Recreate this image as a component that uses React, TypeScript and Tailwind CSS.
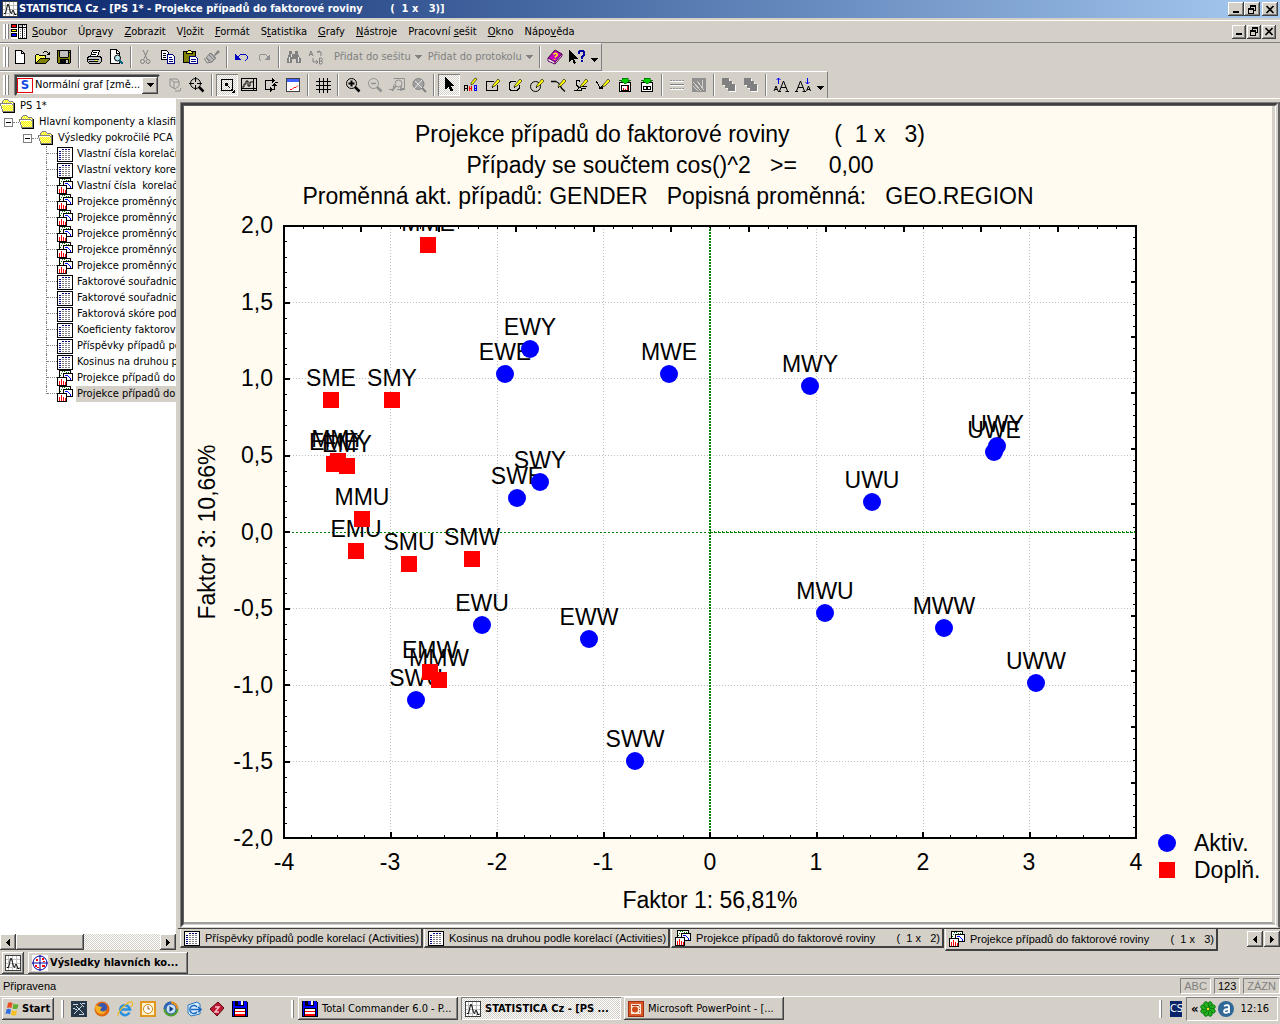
import type { ReactNode } from "react";
import clsx from "clsx";

const raised = "bg-[#d4d0c8] shadow-[inset_-1px_-1px_#404040,inset_1px_1px_#fff,inset_-2px_-2px_#808080]";
const pressed =
  "bg-[repeating-conic-gradient(#fff_0_25%,#d4d0c8_0_50%)] bg-[length:2px_2px] shadow-[inset_1px_1px_#808080,inset_-1px_-1px_#fff]";
const tahoma = "font-['DejaVu_Sans_Condensed','DejaVu_Sans',sans-serif] text-[11px]";
const arial = "font-['Liberation_Sans',sans-serif] text-[11px]";

function Ico({ children, smooth }: { children: ReactNode; smooth?: boolean }) {
  return (
    <svg
      viewBox="0 0 16 16"
      className="block h-4 w-4 shrink-0"
      fill="none"
      stroke="none"
      shapeRendering={smooth ? "auto" : "crispEdges"}
      aria-hidden="true"
    >
      {children}
    </svg>
  );
}

const palette: Record<string, string> = {
  k: "#000",
  w: "#fff",
  g: "#808080",
  l: "#c0c0c0",
  y: "#ffff00",
  o: "#808000",
  b: "#0000ff",
  n: "#000080",
  r: "#ff0000",
  e: "#008000",
  c: "#f8f890",
};

// one character per pixel, "." is transparent
function Pix({ rows }: { rows: string[] }) {
  return (
    <Ico>
      {rows.flatMap((row, y) =>
        row.split("").map((c, x) => (palette[c] ? <rect key={`${x}-${y}`} x={x} y={y} width="1" height="1" fill={palette[c]} /> : null))
      )}
    </Ico>
  );
}

const art = {
  sheet: [
    "................",
    "kkkkkkkkkkkkkkkk",
    "kwwwwwwwwwwwwwwk",
    "kwwwwnnwnnwnnwwk",
    "kwwwwwwwwwwwwwwk",
    "kwnnwggwggwggwwk",
    "kwwwwwwwwwwwwwwk",
    "kwnnwggwggwggwwk",
    "kwwwwwwwwwwwwwwk",
    "kwnnwggwggwggwwk",
    "kwwwwwwwwwwwwwwk",
    "kwnnwggwggwggwwk",
    "kwwwwwwwwwwwwwwk",
    "kwnnwggwggwggwwk",
    "kwwwwwwwwwwwwwwk",
    "kkkkkkkkkkkkkkkk",
  ],
  graph: [
    "..kkkkkkkkkkkk..",
    "..kwwewewwwwwk..",
    "..kwwwwwwewewk..",
    "..kwewkkkkkkkkkk",
    "..kwwwkwwwwwwwwk",
    "..kewwkwbbbwwwwk",
    "..kwwwkwwwwbwwwk",
    "kkkkkkkkkkwwbwwk",
    "kwwwwwwwwkwwwbwk",
    "kwwwrwwwwkwwwbwk",
    "kwwwrwwwwkkkkkkk",
    "kwrwrwrwwk......",
    "kwrwrwrwrk......",
    "kwrwrwrwrk......",
    "kwrwrwrwrk......",
    "kkkkkkkkkk......",
  ],
  folder: [
    "................",
    "....gggg........",
    "...gcycyg.......",
    "..gycycycgggg...",
    "..gcycycycycyg..",
    "gggggggggggg.gk.",
    "gwwwwwwwwwwwggk.",
    "gwycycycycycygk.",
    ".gcycycycycycgk.",
    ".gycycycycycygk.",
    ".gwycycycycycgk.",
    "..gcycycycycygk.",
    "..gycycycycycgk.",
    "..ggggggggggggk.",
    "...kkkkkkkkkkkk.",
    "................",
  ],
  blank: [
    "................",
    "...kkkkkkk......",
    "...kwwwwwkk.....",
    "...kwwwwwkwk....",
    "...kwwwwwkkkk...",
    "...kwwwwwwwwk...",
    "...kwwwwwwwwk...",
    "...kwwwwwwwwk...",
    "...kwwwwwwwwk...",
    "...kwwwwwwwwk...",
    "...kwwwwwwwwk...",
    "...kwwwwwwwwk...",
    "...kwwwwwwwwk...",
    "...kwwwwwwwwk...",
    "...kkkkkkkkkk...",
    "................",
  ],
  open: [
    "................",
    "................",
    "..........kkk...",
    ".........k...k.k",
    "..............kk",
    "..kkk........kkk",
    ".kcyckkkkkkk....",
    ".kycycycycyk....",
    ".kcycycycyck....",
    ".kycyckkkkkkkkkk",
    ".kcyckoooooooook",
    ".kyckoooooooook.",
    ".kckoooooooook..",
    ".kkoooooooook...",
    ".kkkkkkkkkkk....",
    "................",
  ],
  save: [
    "................",
    ".kkkkkkkkkkkkkk.",
    ".kokllllllllkok.",
    ".kokllllllllkkk.",
    ".kokllllllllkok.",
    ".kokllllllllkok.",
    ".kokllllllllkok.",
    ".kokllllllllkok.",
    ".kookkkkkkkkook.",
    ".kooooooooooook.",
    ".kookkkkkkkkkok.",
    ".kookkkkkkllkok.",
    ".kookkkkkkllkok.",
    ".kookkkkkkllkok.",
    "..kkkkkkkkkkkk..",
    "................",
  ],
  floppy: [
    "kbbkkkbbbwwkbbk.",
    "kbbkkkbbbwwkbbbk",
    "kbbkkkbbbwwkbbbk",
    "kbbkkkbbbwwkbbbk",
    "kbbkkkkkkkkkbbbk",
    "kbbbbbbbbbbbbbbk",
    "kbbbbbbbbbbbbbbk",
    "kbkkkkkkkkkkkkbk",
    "kbkwwwwwwwwwwkbk",
    "kbkwwwwwwwwwwkbk",
    "kbkrrrrrrrrrrkbk",
    "kbkwwwwwwwwwwkbk",
    "kbkwwwwwwwwwwkbk",
    "kbkrrrrrrrrrrkbk",
    "kbkrrrrrrrrrrkbk",
    "kkkkkkkkkkkkkkkk",
  ],
  cursor: [
    "....k...........",
    "....kk..........",
    "....kkk.........",
    "....kkkk........",
    "....kkkkk.......",
    "....kkkkkk......",
    "....kkkkkkk.....",
    "....kkkkkkkk....",
    "....kkkkkkkkk...",
    "....kkkkkk......",
    "....kkk.kkk.....",
    "....kk..kkk.....",
    ".........kkk....",
    ".........kkk....",
    "................",
    "................",
  ],
  menuDoc: [
    "kkkkkk.kkkkkkkkk",
    "krrrrkwklllkwgwk",
    "krrrrkwklllkwwwk",
    "kkkkkkwkkkkkkkkk",
    "wwwwwwwkwwwkwwwk",
    "kkkkkkwkwgwkwgwk",
    "kyyyykwkwwwkwwwk",
    "kkkkkkwkwgwkwgwk",
    "wwwwwwwkwwwkwwwk",
    "kkkkkkwkwgwkwgwk",
    "kbbbbkwkwwwkwwwk",
    "kbbbbkwkwgwkwgwk",
    "kkkkkkwkwwwkwwwk",
    "wwwwwwwkwgwkwgwk",
    "wwwwwwwkkkkkkkkk",
    "................",
  ],
};

const StatLogo = () => (
  <Ico>
    <rect width="16" height="16" fill="#fff" />
    <path d="M3.500 0v16M7.500 0v16M11.500 0v16M0 4.500h16M0 8.500h16M0 12.500h16" stroke="#c0c0c0" />
    <path d="M.5.5h15v15H.5z" stroke="#404040" />
    <path d="M2 12.500h1.500l1-4 1-5h1l1 4 1 4 1 1 1-3h1l1 3v1h2" stroke="#000" shapeRendering="auto" />
  </Ico>
);

const Pencil = () => (
  <>
    <path d="M8 8l5-6 2 2-5 5-3 1z" fill="#ffff00" stroke="#000" strokeWidth=".6" shapeRendering="auto" />
    <path d="M7 10.500h1" stroke="#000" />
  </>
);

const Lens = ({ color = "#000", children }: { color?: string; children?: ReactNode }) => (
  <Ico smooth>
    <circle cx="6.500" cy="6.500" r="5" stroke={color} />
    <path d="M10 10l4.500 4.500" stroke={color} strokeWidth="2.500" />
    {children}
  </Ico>
);

const icons = {
  blank: <Pix rows={art.blank} />,
  open: <Pix rows={art.open} />,
  save: <Pix rows={art.save} />,
  print: (
    <Ico>
      <path d="M4.500 7.500l2-6h7l-2 6z" fill="#fff" stroke="#000" />
      <path d="M7 3.500h4M6 5.500h4" stroke="#000" />
      <path d="M1.500 8.500l2-1h10l2 1v4l-2 2h-10l-2-2z" fill="#c0c0c0" stroke="#000" />
      <path d="M2 10.500h11M3 12.500h9" stroke="#000" />
      <path d="M9 11.500h2" stroke="#ff0" />
    </Ico>
  ),
  preview: (
    <Ico>
      <path d="M2.500.5h6l3 3v11h-9z" fill="#fff" stroke="#000" />
      <path d="M8.500 1v3h3" stroke="#000" />
      <circle cx="9.500" cy="9" r="3" fill="#b8e8f0" stroke="#000" shapeRendering="auto" />
      <path d="M11.500 11.500l3.500 3.500" stroke="#006080" strokeWidth="2" />
    </Ico>
  ),
  cut: (
    <Ico smooth>
      <path d="M5 1l4 9M10 1L6 10" stroke="#808080" />
      <circle cx="4.500" cy="12.500" r="2" stroke="#808080" />
      <circle cx="10" cy="12.500" r="2" stroke="#808080" />
    </Ico>
  ),
  copy: (
    <Ico>
      <path d="M1.500 1.500h5l2 2v7h-7z" fill="#fff" stroke="#000" />
      <path d="M3 4.500h3M3 6.500h3M3 8.500h3" stroke="#000" />
      <path d="M7.500 5.500h5l2 2v7h-7z" fill="#fff" stroke="#000080" />
      <path d="M9 8.500h3M9 10.500h4M9 12.500h4" stroke="#000080" />
    </Ico>
  ),
  paste: (
    <Ico>
      <path d="M1.500 2.500h12v11h-12z" fill="#808000" stroke="#000" />
      <path d="M4.500 3.500l2-2h2l2 2v1h-6z" fill="#ffff60" stroke="#000" />
      <path d="M7.500 7.500h6l2 2v5h-8z" fill="#fff" stroke="#000080" />
      <path d="M9 10.500h5M9 12.500h5" stroke="#000080" />
    </Ico>
  ),
  brush: (
    <Ico smooth>
      <path d="M10 6l4-5 2 2-5 4z" fill="#808080" />
      <path d="M6 4l6 5-4 4-6-4z" fill="#b8b8b8" stroke="#808080" />
      <path d="M7 4l4 5M5 6l5 5M0 9l3 5 5-1M3 9l2 4" stroke="#808080" />
    </Ico>
  ),
  undo: (
    <Ico>
      <path d="M1 5v6h6z" fill="#0000c0" />
      <path d="M4 8l3-3h4l2 2v3l-2 2" stroke="#0000c0" />
    </Ico>
  ),
  redo: (
    <Ico>
      <path d="M14 5v6H8z" fill="#909090" />
      <path d="M12 8L9 5H5L3 7v3l2 2" stroke="#909090" />
    </Ico>
  ),
  find: (
    <Ico>
      <path d="M3 2h3v3h3V2h3v3l3 5v4h-5v-4H6v4H1v-4l2-5z" fill="#808080" />
      <path d="M3.500 8v5M12.500 8v5M5.500 5v3" stroke="#e8e8e8" />
    </Ico>
  ),
  replace: (
    <Ico smooth>
      <path d="M1 7l2-5 2 5M2 5.500h2M9 3h4v4M9 3l3-1M5 9v4h4M8 11l2 2-2 2" stroke="#808080" />
      <path d="M11.500 9v6h2l1-1.500-1-1.500 1-1.500-1-1.500zM11.500 12h2" stroke="#808080" />
    </Ico>
  ),
  book: (
    <Ico smooth>
      <path d="M1 9l7-8 7 4-7 9z" fill="#c000c0" stroke="#400040" />
      <path d="M1 9v3l7 3v-2zM8 15l7-8V5l-7 8" fill="#fff" stroke="#600060" />
      <path d="M6.500 5.500Q8 3.500 10 5q1 1.500-1.500 2.500l-.5 1M7.500 10v1" stroke="#ff0" strokeWidth="1.500" />
    </Ico>
  ),
  whatsThis: (
    <Ico>
      <path d="M0 1v12l3-3 2 5 2-1-2-4h4z" fill="#000" />
      <path d="M10 5V3l1-1h3l1 1v3l-2 2v2M12 12h2" stroke="#0000a0" strokeWidth="2" />
    </Ico>
  ),
  rotate: (
    <Ico smooth>
      <path d="M3 2h7l2 2v5L8 12 3 9zM3 2l4 3v6M7 5h5M8 14h5l1-3" stroke="#909090" />
    </Ico>
  ),
  target: (
    <Lens>
      <path d="M6.500 0v5M6.500 8v5M0 6.500h5M8 6.500h5" stroke="#000" />
    </Lens>
  ),
  fit: (
    <Ico>
      <path d="M2.500 2.500h11v11h-11z" stroke="#000" />
      <path d="M6 6h3v3H6z" fill="#000" />
      <path d="M8 8l3 3M12 12l2 2" stroke="#000" />
      <path d="M16 12v4h-4z" fill="#000" />
    </Ico>
  ),
  graphSize: (
    <Ico>
      <path d="M.5 1.500h15v12H.5zM12.500 1v13M0 11.500h15" stroke="#000" />
      <path d="M1 10h2V7h2V4h2v5h2V5h3" stroke="#000" shapeRendering="auto" />
    </Ico>
  ),
  move: (
    <Ico>
      <path d="M9 3.500H2.500v9H7M11.500 7v5.500H9" stroke="#000" />
      <path d="M9 1l3 2.500L9 6zM9 9l2.500-3L14 9zM7 10l3 2.500L7 15z" fill="#000" />
      <path d="M12 5.500h3" stroke="#000" />
    </Ico>
  ),
  chartWin: (
    <Ico>
      <path d="M1.500 1.500h13v13h-13z" fill="#fff" stroke="#404040" />
      <path d="M2 2h12v3H2z" fill="#4060ff" />
      <path d="M5 12.500h2l2-2h2l2-2" stroke="#ff0000" shapeRendering="auto" />
    </Ico>
  ),
  grid: (
    <Ico>
      <path d="M4.500 1v15M8.500 1v15M12.500 1v15M1 4.500h15M1 8.500h15M1 12.500h15" stroke="#000" />
    </Ico>
  ),
  zoomIn: (
    <Lens>
      <path d="M6.500 3.500v6M3.500 6.500h6" stroke="#000" strokeWidth="2" />
    </Lens>
  ),
  zoomOut: (
    <Lens color="#909090">
      <path d="M4 6.500h5" stroke="#909090" strokeWidth="1.500" />
    </Lens>
  ),
  zoomChart: (
    <Ico smooth>
      <path d="M4.500 1.500h11v10h-3M0 12.500h4l1-5M8 12.500h8" stroke="#909090" />
      <circle cx="9.500" cy="6.500" r="3.500" stroke="#909090" />
      <path d="M7 9l-4 5M12 9v5" stroke="#909090" strokeWidth="1.500" />
    </Ico>
  ),
  zoomCancel: (
    <Ico smooth>
      <circle cx="7.500" cy="7" r="5.500" fill="#a0a0a0" stroke="#808080" />
      <path d="M4 4l9 9M11 3L3 12" stroke="#e8e8e8" />
      <path d="M11 11l4 4" stroke="#808080" strokeWidth="2" />
    </Ico>
  ),
  cursor: <Pix rows={art.cursor} />,
  textTool: (
    <Ico>
      <path d="M1.500 14V8h3v6M2 11.500h2" stroke="#000" />
      <path d="M6.500 14V9M8.500 14V9M7 11.500h2" stroke="#f00" />
      <path d="M11.500 8.500v5h2v-5zM12 11.500h2" stroke="#00f" />
      <path d="M8 6l4-5 2 1-4 5-2 1z" fill="#ff0" stroke="#000" strokeWidth=".6" shapeRendering="auto" />
    </Ico>
  ),
  rectTool: (
    <Ico>
      <path d="M9 4.500H1.500v9h11V8" stroke="#000" />
      <Pencil />
    </Ico>
  ),
  roundTool: (
    <Ico>
      <path d="M9 4.500H4l-2 2v5l2 2h6l2-2V8" stroke="#000" />
      <Pencil />
    </Ico>
  ),
  ovalTool: (
    <Ico smooth>
      <circle cx="6.500" cy="9.500" r="5" stroke="#000" />
      <Pencil />
    </Ico>
  ),
  curveTool: (
    <Ico smooth>
      <path d="M0 4.500h5q3 1 4 4t5 6" stroke="#000" strokeWidth="1.300" />
      <Pencil />
    </Ico>
  ),
  freeTool: (
    <Ico>
      <path d="M1 13.500h3l2-3-3-3V4l3-1 1 2M5 13.500h3l1-2h4M9 9.500h5" stroke="#000" />
      <Pencil />
    </Ico>
  ),
  arrowTool: (
    <Ico>
      <path d="M1 4l5 8" stroke="#000" />
      <path d="M3 12h5V8z" fill="#000" />
      <Pencil />
    </Ico>
  ),
  embedChart: (
    <Ico>
      <path d="M2.500 5.500h11v9h-11z" fill="#fff" stroke="#000" />
      <path d="M4.500 8.500h7v5h-7z" stroke="#000" />
      <path d="M6 13v-2h1v2zM8 13v-1h1v1zM10 13V9h1v4z" fill="#f00" />
      <path d="M5 1h6v2h3L8 7 2 3h3z" fill="#00d000" stroke="#004000" strokeWidth=".5" />
    </Ico>
  ),
  embedObject: (
    <Ico>
      <path d="M2.500 5.500h11v9h-11z" fill="#fff" stroke="#000" />
      <path d="M4 9h8v4H4z" fill="#000" />
      <path d="M5 10h2v2H5zM9 10h2v2H9z" fill="#fff" />
      <path d="M5 1h6v2h3L8 7 2 3h3z" fill="#00d000" stroke="#004000" strokeWidth=".5" />
    </Ico>
  ),
  lines: (
    <Ico>
      <path d="M1 3.500h14M1 11.500h14" stroke="#909090" strokeDasharray="2 1" />
      <path d="M1 7.500h14" stroke="#808080" />
      <path d="M1 8.500h14M1 4.500h14M1 12.500h14" stroke="#fff" />
    </Ico>
  ),
  hatch: (
    <Ico>
      <path d="M1 1h14v14H1z" fill="#909090" />
      <path d="M2 5l8 9M2 9l5 5M6 4l7 9M11 3v9" stroke="#d4d0c8" />
    </Ico>
  ),
  boxes: (
    <Ico>
      <path d="M2 2h7v3h3v3h3v7H8v-3H5V9H2z" fill="#fff" />
      <path d="M1 1h7v3h3v3h3v7H7v-3H4V8H1z" fill="#808080" />
    </Ico>
  ),
  fontUp: (
    <Ico smooth>
      <path d="M1 14l2-5 2 5M2 12.500h2M6.500 14l4-10 4 10M8 10.500h5M5 14.500h3M12.500 14.500H16" stroke="#000" />
      <path d="M5.500 7V1M3.500 3l2-2 2 2" stroke="#00f" />
    </Ico>
  ),
  fontDown: (
    <Ico smooth>
      <path d="M1.500 14l4-10 4 10M3 10.500h5M0 14.500h3M7.500 14.500H11M11.500 14l2-5 2 5M12 12.500h3" stroke="#000" />
      <path d="M12.500 1v6M10.500 5l2 2 2-2" stroke="#00f" />
    </Ico>
  ),
};

type IconName = keyof typeof icons;

function ToolButton({ name, active }: { name: IconName; active?: boolean }) {
  return (
    <button type="button" aria-label={name} className={clsx("flex h-[22px] w-[22px] shrink-0 items-center justify-center", active && pressed)}>
      {icons[name]}
    </button>
  );
}

const Sep = () => <span className="mx-[3px] h-[22px] w-[2px] shrink-0 border-l border-l-[#808080] bg-white" />;

const Grip = () => (
  <span className="flex w-[9px] shrink-0 self-stretch py-[3px] pl-[3px]">
    <span className="w-[3px] border-r border-[#808080] bg-white" />
    <span className="w-[3px] border-r border-[#808080] bg-white" />
  </span>
);

function Tools({ groups, active }: { groups: IconName[][]; active?: IconName[] }) {
  return (
    <>
      {groups.map((group, i) => (
        <div key={i} className="flex items-center">
          {i > 0 && <Sep />}
          {group.map((name, j) => (
            <ToolButton key={j} name={name} active={active?.includes(name)} />
          ))}
        </div>
      ))}
    </>
  );
}

const Down = ({ gray }: { gray?: boolean }) => (
  <svg viewBox="0 0 7 4" className="h-1 w-[7px] shrink-0" shapeRendering="crispEdges" aria-hidden="true">
    <path d="M0 0h7L3.500 4z" fill={gray ? "#808080" : "#000"} />
  </svg>
);

const MoreButton = () => (
  <button type="button" aria-label="More" className="flex self-end px-[3px] pb-2">
    <Down />
  </button>
);

function WindowButtons({ small }: { small?: boolean }) {
  const box = clsx(raised, "flex h-[14px] items-center justify-center", small ? "w-[14px]" : "w-4");
  return (
    <div className="flex shrink-0">
      <button type="button" aria-label="Minimize" className={box}>
        <svg viewBox="0 0 10 9" className="h-[9px] w-[10px]"><path d="M2 6h6v2H2z" /></svg>
      </button>
      <button type="button" aria-label="Restore" className={clsx(box, small && "ml-px")}>
        <svg viewBox="0 0 10 9" className="h-[9px] w-[10px]" shapeRendering="crispEdges">
          <path d="M3 0h6v6H7V5h1V2H4v1H3z" />
          <path d="M1 3h6v6H1zM2 5v3h4V5z" fillRule="evenodd" />
        </svg>
      </button>
      <button type="button" aria-label="Close" className={clsx(box, small ? "ml-px" : "ml-[2px]")}>
        <svg viewBox="0 0 10 9" className="h-[9px] w-[10px]"><path d="M1.500 1l7 7M8.500 1l-7 7" stroke="#000" strokeWidth="1.700" /></svg>
      </button>
    </div>
  );
}

// text before, accelerator letter, text after
const menu = [
  ["", "S", "oubor"],
  ["Úpr", "a", "vy"],
  ["", "Z", "obrazit"],
  ["V", "l", "ožit"],
  ["", "F", "ormát"],
  ["S", "t", "atistika"],
  ["", "G", "rafy"],
  ["", "N", "ástroje"],
  ["Pracovní ", "s", "ešit"],
  ["", "O", "kno"],
  ["Nápo", "v", "ěda"],
];

type Leaf = { icon: "sheet" | "graph"; label: string };

const leaves: Leaf[] = [
  { icon: "sheet", label: "Vlastní čísla korelační" },
  { icon: "sheet", label: "Vlastní vektory korela" },
  { icon: "graph", label: "Vlastní čísla  korelační" },
  { icon: "graph", label: "Projekce proměnných" },
  { icon: "graph", label: "Projekce proměnných" },
  { icon: "graph", label: "Projekce proměnných" },
  { icon: "graph", label: "Projekce proměnných" },
  { icon: "graph", label: "Projekce proměnných" },
  { icon: "sheet", label: "Faktorové souřadnic" },
  { icon: "sheet", label: "Faktorové souřadnic" },
  { icon: "sheet", label: "Faktorová skóre pod" },
  { icon: "sheet", label: "Koeficienty faktorový" },
  { icon: "sheet", label: "Příspěvky případů po" },
  { icon: "sheet", label: "Kosinus na druhou po" },
  { icon: "graph", label: "Projekce případů do " },
  { icon: "graph", label: "Projekce případů do " },
];

const Minus = () => (
  <>
    <span className="flex h-[9px] w-[9px] shrink-0 items-center justify-center border border-[#808080] bg-white">
      <span className="h-px w-[5px] bg-black" />
    </span>
    <span className="w-[6px] shrink-0 border-t border-dotted border-[#808080]" />
  </>
);

function Tree() {
  return (
    <ul className="min-h-0 flex-1 overflow-hidden bg-white leading-4 whitespace-pre">
      <li className="flex h-4 items-center gap-1">
        <Pix rows={art.folder} />
        PS 1*
      </li>
      <li className="flex h-4 items-center pl-1">
        <Minus />
        <Pix rows={art.folder} />
        <span className="pl-1">Hlavní komponenty a klasifika</span>
      </li>
      <li className="flex h-4 items-center pl-[23px]">
        <Minus />
        <Pix rows={art.folder} />
        <span className="pl-1">Výsledky pokročilé PCA f</span>
      </li>
      {leaves.map((leaf, i) => {
        const last = i === leaves.length - 1;
        return (
          <li key={i} className="flex h-4 pl-[46px]">
            <span className={clsx("w-[11px] shrink-0 border-l border-dotted border-[#808080]", last && "h-2")}>
              <span className="block h-2 border-b border-dotted border-[#808080]" />
            </span>
            <Pix rows={art[leaf.icon]} />
            <span className={clsx("ml-[3px] flex-1 pl-px", last && "bg-[#d4d0c8]")}>{leaf.label}</span>
          </li>
        );
      })}
    </ul>
  );
}

function ArrowButton({ dir }: { dir: "left" | "right" }) {
  return (
    <button type="button" aria-label={dir} className={clsx(raised, "flex h-4 w-4 shrink-0 items-center justify-center")}>
      <svg viewBox="0 0 4 7" className="h-[7px] w-1" shapeRendering="crispEdges">
        <path d={dir === "left" ? "M4 0v7L0 3.500z" : "M0 0v7l4-3.500z"} />
      </svg>
    </button>
  );
}

type Point = { name: string; x: number; y: number };

const aktiv: Point[] = [
  { name: "EWY", x: -1.69, y: 1.19 },
  { name: "EWE", x: -1.92, y: 1.03 },
  { name: "MWE", x: -0.38, y: 1.03 },
  { name: "MWY", x: 0.94, y: 0.95 },
  { name: "UWY", x: 2.7, y: 0.56 },
  { name: "UWE", x: 2.67, y: 0.52 },
  { name: "UWU", x: 1.53, y: 0.19 },
  { name: "SWY", x: -1.59, y: 0.32 },
  { name: "SWE", x: -1.81, y: 0.22 },
  { name: "EWU", x: -2.14, y: -0.61 },
  { name: "EWW", x: -1.13, y: -0.7 },
  { name: "MWU", x: 1.08, y: -0.53 },
  { name: "MWW", x: 2.2, y: -0.63 },
  { name: "UWW", x: 3.07, y: -0.99 },
  { name: "SWU", x: -2.76, y: -1.1 },
  { name: "SWW", x: -0.7, y: -1.5 },
];

const dopln: Point[] = [
  { name: "MME", x: -2.64, y: 1.87 },
  { name: "SME", x: -3.55, y: 0.86 },
  { name: "SMY", x: -2.98, y: 0.86 },
  { name: "EME", x: -3.53, y: 0.44 },
  { name: "MMY", x: -3.49, y: 0.46 },
  { name: "EMY", x: -3.4, y: 0.43 },
  { name: "MMU", x: -3.26, y: 0.08 },
  { name: "EMU", x: -3.32, y: -0.13 },
  { name: "SMU", x: -2.82, y: -0.21 },
  { name: "SMW", x: -2.23, y: -0.18 },
  { name: "EMW", x: -2.62, y: -0.92 },
  { name: "MMW", x: -2.54, y: -0.97 },
];

const box = { left: 100, right: 952, top: 120, bottom: 732 };
const sx = (v: number) => Math.floor(526 + v * 106.5);
const sy = (v: number) => Math.floor(426 - v * 153.2);
const range = (n: number) => Array.from({ length: n }, (_, i) => i);
const comma = (v: number) => v.toFixed(1).replace(".", ",");

function Chart() {
  return (
    <svg
      viewBox="0 0 1088 816"
      className="block h-auto w-full bg-[#fffbf0] font-['Liberation_Sans',sans-serif] text-[23px] [&_text]:whitespace-pre"
      role="img"
    >
      <clipPath id="plot">
        <rect x={box.left} y={box.top} width="852" height="612" />
      </clipPath>
      <g textAnchor="middle">
        <text x="486" y="36">{"Projekce případů do faktorové roviny       (  1 x   3)"}</text>
        <text x="486" y="67">{"Případy se součtem cos()^2   >=     0,00"}</text>
        <text x="484" y="98">{"Proměnná akt. případů: GENDER   Popisná proměnná:   GEO.REGION"}</text>
        <text x="526" y="802">Faktor 1: 56,81%</text>
        <text transform="translate(31 426) rotate(-90)">Faktor 3: 10,66%</text>
      </g>
      <g shapeRendering="crispEdges">
        <rect x={box.left} y={box.top} width="852" height="612" fill="#fff" />
        <g stroke="#c0c0c0" strokeDasharray="1 2">
          {[-3, -2, -1, 1, 2, 3].map((v) => (
            <path key={v} d={`M${sx(v) + 0.5} ${box.top}V${box.bottom}`} />
          ))}
          {[-1.5, -1, -0.5, 0.5, 1, 1.5].map((v) => (
            <path key={v} d={`M${box.left} ${sy(v) + 0.5}H${box.right}`} />
          ))}
        </g>
        <path d={`M526 ${box.top}V${box.bottom}`} stroke="#008000" strokeWidth="2" strokeDasharray="2 1" />
        <path d={`M${box.left} 426.500H526`} stroke="#008000" strokeDasharray="2 2" />
        <path d={`M526 426.500H${box.right}`} stroke="#008000" strokeDasharray="3 1" />
        <path d={`M526 425.500H${box.right}`} stroke="#008000" strokeDasharray="1 3" />
        <path d={`M${box.left} 120H${box.right}V732H${box.left}z`} fill="none" stroke="#000" strokeWidth="2" />
        <g stroke="#000">
          {range(33).map((i) => {
            const x = Math.round(box.left + i * 26.625);
            return <path key={i} d={`M${x} 732v${i % 4 ? -3 : -6}`} strokeWidth={i % 4 ? 1 : 2} />;
          })}
          {range(41).map((i) => {
            const y = Math.round(box.top + i * 15.3);
            return <path key={i} d={`M100 ${y}h${i % 5 ? 3 : 6}`} strokeWidth={i % 5 ? 1 : 2} />;
          })}
          {range(45).map((i) => {
            const x = Math.round(box.left + i * 19.36);
            return <path key={i} d={`M${x} 120v${i % 4 ? 3 : 6}`} strokeWidth={i % 4 ? 1 : 2} />;
          })}
          {range(56).map((i) => {
            const y = Math.round(box.top + i * 11.13);
            return <path key={i} d={`M952 ${y}h${i % 5 ? -3 : -5}`} strokeWidth={i % 5 ? 1 : 2} />;
          })}
        </g>
      </g>
      <g textAnchor="middle">
        {range(9).map((i) => (
          <text key={i} x={sx(i - 4)} y="764">{i - 4}</text>
        ))}
      </g>
      <g textAnchor="end">
        {range(9).map((i) => (
          <text key={i} x="89" y={sy(2 - i / 2) + 8}>{comma(2 - i / 2)}</text>
        ))}
      </g>
      <g clipPath="url(#plot)">
        <g textAnchor="middle">
          {[...aktiv, ...dopln].map((p) => (
            <text key={p.name} x={sx(p.x)} y={sy(p.y) - 14}>{p.name}</text>
          ))}
        </g>
        {aktiv.map((p) => (
          <circle key={p.name} cx={sx(p.x)} cy={sy(p.y)} r="9" fill="#00f" />
        ))}
        {dopln.map((p) => (
          <rect key={p.name} x={sx(p.x) - 8} y={sy(p.y) - 8} width="16" height="16" fill="#f00" />
        ))}
      </g>
      <circle cx="983" cy="737" r="9" fill="#00f" />
      <rect x="975" y="756" width="16" height="16" fill="#f00" />
      <text x="1010" y="745">Aktiv.</text>
      <text x="1010" y="772">Doplň.</text>
    </svg>
  );
}

const tabs: Leaf[] = [
  { icon: "sheet", label: "Příspěvky případů podle korelací (Activities)" },
  { icon: "sheet", label: "Kosinus na druhou podle korelací (Activities)" },
  { icon: "graph", label: "Projekce případů do faktorové roviny       (  1 x   2)" },
  { icon: "graph", label: "Projekce případů do faktorové roviny       (  1 x   3)" },
];

function SheetTabs() {
  return (
    <div className={clsx(arial, "flex h-[23px] items-start border-t border-[#404040] pl-[2px]")} role="tablist">
      {tabs.map((tab, i) => {
        const active = i === tabs.length - 1;
        return (
          <button
            key={i}
            type="button"
            role="tab"
            aria-selected={active}
            className={clsx(
              "mr-px flex items-center gap-[5px] border-r-2 border-b-2 border-l border-[#404040] border-l-white bg-[#d4d0c8] pr-[2px] pl-[3px] whitespace-pre",
              active ? "h-[22px]" : "h-[19px]"
            )}
          >
            <Pix rows={art[tab.icon]} />
            {tab.label}
          </button>
        );
      })}
      <div className="mt-[2px] ml-auto flex gap-px">
        <ArrowButton dir="left" />
        <ArrowButton dir="right" />
      </div>
    </div>
  );
}

const quickLaunch: ReactNode[] = [
  <Ico key="desktop">
    <rect width="16" height="16" fill="#283848" />
    <path d="M2 3h5M9 2l4 4M3 13l9-9M2 7l4 2M8 13h5M5 5l8 8M11 2h3" stroke="#c8d8e8" />
  </Ico>,
  <Ico key="fox" smooth>
    <circle cx="8" cy="8" r="7.500" fill="#e06810" />
    <circle cx="8.500" cy="6.500" r="4.500" fill="#3858b0" />
    <path d="M1 5q2-1 3 0l4 1-2 3q3 3 6 0-1 5-6 4-5-2-5-8z" fill="#f8b020" />
  </Ico>,
  <Ico key="ie" smooth>
    <path d="M12.500 11.500A5 5 0 1 1 13 8.500H4" stroke="#2890e0" strokeWidth="2.500" />
    <path d="M1 15q-1-3 5-9t9-5q2 1-1 5" stroke="#f0b820" strokeWidth="1.200" />
  </Ico>,
  <Ico key="outlook" smooth>
    <rect x="1" y="1" width="14" height="14" fill="#fff4c8" stroke="#e09820" strokeWidth="2" />
    <circle cx="8" cy="8" r="4.500" fill="#fff" stroke="#d08818" />
    <path d="M8 5v3h2" stroke="#a06010" />
  </Ico>,
  <Ico key="media" smooth>
    <circle cx="8" cy="8" r="7.500" fill="#50a030" />
    <path d="M8 .5A7.500 7.500 0 0 1 15.500 8H8z" fill="#f09020" />
    <path d="M.5 8A7.500 7.500 0 0 1 8 .5V8z" fill="#3060c0" />
    <circle cx="8" cy="8" r="5" fill="#c8e0f8" stroke="#3060a0" />
    <path d="M6.500 5l4 3-4 3z" fill="#103880" />
  </Ico>,
  <Ico key="express" smooth>
    <path d="M2 4l9-3 3 2v10l-9 2-3-3z" fill="#d8ecfc" stroke="#2878c0" />
    <path d="M11 6a4 4 0 1 0 0 5M5 8.500h9M12 6l3 2.500-3 2.500" stroke="#1868c0" strokeWidth="1.500" />
  </Ico>,
  <Ico key="reader" smooth>
    <path d="M1 8l8-7 6 6-7 8z" fill="#c01830" stroke="#600818" />
    <path d="M6 6h4l-4 5h4" stroke="#f8c0c8" strokeWidth="1.500" />
  </Ico>,
  <Pix key="floppy" rows={art.floppy} />,
];

const Flag = () => (
  <Ico smooth>
    <path d="M3 2q2-1.500 4.500 0l-1 5Q4 6 2 7z" fill="#e85020" />
    <path d="M8.500 2.500q2.500 1.500 5 .5l-1 4.500q-2.500 1-5 0z" fill="#60b030" />
    <path d="M1.500 8.500q2-1.500 4.500 0l-1 5Q3 12 .5 13z" fill="#3070e0" />
    <path d="M7 9q2.500 1.500 5 .5L11 14q-2.500 1-5 0z" fill="#f8c020" />
  </Ico>
);

const Divider = () => <span className="block h-[18px] w-[3px] shrink-0 border-r border-[#808080] bg-white" />;

function Taskbar() {
  const task = "flex h-[23px] w-40 min-w-0 items-center gap-1 pr-1 pl-1 whitespace-pre";
  return (
    <footer className="flex h-7 items-center border-t border-white pb-1 pl-[2px]">
      <button type="button" className={clsx(raised, "flex h-[22px] w-[52px] items-center gap-px pl-[3px] font-bold")}>
        <Flag />
        Start
      </button>
      <div className="flex items-center gap-[7px] pr-[43px] pl-[7px]">
        <Divider />
        {quickLaunch}
      </div>
      <Divider />
      <div className="ml-1 flex gap-[3px]">
        <button type="button" className={clsx(raised, task)}>
          <Pix rows={art.floppy} />
          Total Commander 6.0 - P...
        </button>
        <button type="button" className={clsx(pressed, task, "font-bold")}>
          <StatLogo />
          STATISTICA Cz - [PS ...
        </button>
        <button type="button" className={clsx(raised, task)}>
          <Ico smooth>
            <rect x=".5" y=".5" width="15" height="15" fill="#d85828" stroke="#a03010" />
            <rect x="3" y="3" width="10" height="10" fill="#fce8d8" />
            <circle cx="7" cy="8.500" r="3" fill="#d04818" />
            <path d="M11 6h1M11 8.500h1M11 11h1M4 4.500h7" stroke="#a03010" />
          </Ico>
          Microsoft PowerPoint - [...
        </button>
      </div>
      <div className="ml-auto"><Divider /></div>
      <span className="ml-2 w-3 overflow-hidden bg-[#0a246a] leading-4 text-white">CS</span>
      <div className="mr-[2px] ml-1 flex h-6 items-center gap-[2px] border border-[#808080] border-r-white border-b-white px-2 pl-1">
        <span className="text-[13px] leading-3 font-bold">«</span>
        <Ico smooth>
          {[22, 67, 112, 157, 202, 247, 292, 337].map((a) => (
            <ellipse key={a} cx="8" cy="3.500" rx="2.300" ry="3.300" fill="#20b020" stroke="#006000" strokeWidth=".6" transform={`rotate(${a} 8 8)`} />
          ))}
          <circle cx="8" cy="8" r="1.200" fill="#f8e020" />
        </Ico>
        <Ico smooth>
          <circle cx="8" cy="8" r="8" fill="#306898" />
          <path d="M6 5q5-2 5 1v6M11 8q-5 0-5 2.500t5 .5" stroke="#fff" strokeWidth="1.800" />
        </Ico>
        <span className="ml-1">12:16</span>
      </div>
    </footer>
  );
}

export default function App() {
  return (
    <div className={clsx(tahoma, "flex min-h-screen flex-col bg-[#d4d0c8] leading-[14px] text-black")}>
      <header className="flex h-[18px] items-center gap-px bg-linear-to-r from-[#0a246a] to-[#a6caf0] px-[2px]">
        <StatLogo />
        <h1 className="flex-1 font-bold whitespace-pre text-white">{"STATISTICA Cz - [PS 1* - Projekce případů do faktorové roviny        (  1 x   3)]"}</h1>
        <WindowButtons />
      </header>

      <nav className="mt-[2px] flex h-[23px] items-center border-t border-b border-t-white border-b-[#808080] pr-1">
        <Grip />
        <span className="pl-[2px]"><Pix rows={art.menuDoc} /></span>
        {menu.map(([before, key, after]) => (
          <button key={before + key} type="button" className="pr-[6px] pl-[5px] whitespace-pre">
            {before}
            <u>{key}</u>
            {after}
          </button>
        ))}
        <span className="flex-1" />
        <WindowButtons small />
      </nav>

      <div className="flex h-7">
        <div className="flex items-center border-t border-r border-b border-t-white border-r-[#808080] border-b-[#808080]">
          <Grip />
          <Tools
            groups={[
              ["blank", "open", "save"],
              ["print", "preview"],
              ["cut", "copy", "paste", "brush"],
              ["undo", "redo"],
              ["find", "replace"],
            ]}
          />
          <div className="flex pl-1 text-[#808080]">
            {["Přidat do sešitu", "Přidat do protokolu"].map((label) => (
              <button key={label} type="button" className="flex items-center gap-1 px-[3px]">
                {label}
                <Down gray />
              </button>
            ))}
          </div>
          <Sep />
          <Tools groups={[["book", "whatsThis"]]} />
          <MoreButton />
        </div>
      </div>

      <div className="flex h-[27px]">
        <div className="flex items-center border-t border-r border-t-white border-r-[#808080]">
          <Grip />
          <label className="mr-1 ml-[6px] flex h-[21px] w-[145px] items-center border-2 border-[#d4d0c8] border-t-[#404040] border-l-[#404040] bg-white shadow-[-1px_-1px_#808080]">
            <span className="flex h-[15px] w-4 shrink-0 items-center justify-center border border-red-600 text-[13px] font-bold text-blue-700">S</span>
            <select aria-label="Styl grafu" className="min-w-0 flex-1 appearance-none pl-[2px] outline-none">
              <option>Normální graf [změ...</option>
            </select>
            <span className={clsx(raised, "flex h-[17px] w-4 shrink-0 items-center justify-center")}><Down /></span>
          </label>
          <Tools
            active={["fit", "cursor"]}
            groups={[
              ["rotate", "target"],
              ["fit", "graphSize", "move", "chartWin"],
              ["grid"],
              ["zoomIn", "zoomOut", "zoomChart", "zoomCancel"],
              ["cursor", "textTool", "rectTool", "roundTool", "ovalTool", "curveTool", "freeTool", "arrowTool", "embedChart", "embedObject"],
              ["lines", "hatch"],
              ["boxes", "boxes"],
              ["fontUp", "fontDown"],
            ]}
          />
          <MoreButton />
        </div>
      </div>

      <main className="flex flex-1">
        <aside className="flex w-[176px] shrink-0 flex-col">
          <Tree />
          <div className="mb-px flex h-4 shrink-0 bg-[repeating-conic-gradient(#fff_0_25%,#d4d0c8_0_50%)] bg-[length:2px_2px]">
            <ArrowButton dir="left" />
            <span className={clsx(raised, "w-[68px]")} />
            <span className="flex-1" />
            <ArrowButton dir="right" />
          </div>
        </aside>
        <section className="flex min-w-0 flex-1 flex-col border-t border-l border-t-white border-l-[#d4d0c8] pl-px">
          <div className="flex-1 pt-[3px] pl-[2px]">
            <div className="border-t border-r-2 border-b border-l border-t-[#808080] border-r-[#606060] border-b-[#d4d0c8] border-l-[#808080]">
              <div className="border-2 border-[#404040] border-r-[#d4d0c8] border-b-white">
                <div className="border border-[#606060] border-r-white border-b-[#d4d0c8]">
                  <div className="border-r-[3px] border-b-2 border-r-[#d4d0c8] border-b-[#a0a0a0]">
                    <Chart />
                  </div>
                </div>
              </div>
            </div>
          </div>
          <SheetTabs />
        </section>
      </main>

      <div className="flex h-6 items-center gap-1 border-b border-[#808080] pl-[2px]">
        <button type="button" aria-label="STATISTICA" className={clsx(raised, "flex h-[22px] w-[22px] items-center justify-center")}><StatLogo /></button>
        <button type="button" className={clsx(raised, "flex h-[22px] w-40 items-center gap-[2px] pl-1 font-bold")}>
          <Ico smooth>
            <rect width="16" height="16" fill="#fff" />
            <circle cx="8" cy="8" r="7" stroke="#0000a0" />
            <path d="M8 0v16M0 8h16" stroke="#0000a0" />
            <path d="M4 4h2v2H4zM10 3h2v2h-2zM11 6h2v1h-2zM3 10h2v2H3zM5 12h2v1H5zM10 10h3v2h-3z" fill="#f00" />
          </Ico>
          Výsledky hlavních ko...
        </button>
      </div>

      <div className={clsx(arial, "flex h-[21px] items-center border-t border-white pl-[3px]")}>
        <span className="flex-1">Připravena</span>
        <div className="flex gap-[3px]">
          {["ABC", "123", "ZÁZN"].map((s) => (
            <span key={s} className={clsx("border border-[#808080] border-r-white border-b-white px-[3px]", s !== "123" && "text-[#808080]")}>
              {s}
            </span>
          ))}
        </div>
      </div>

      <Taskbar />
    </div>
  );
}
